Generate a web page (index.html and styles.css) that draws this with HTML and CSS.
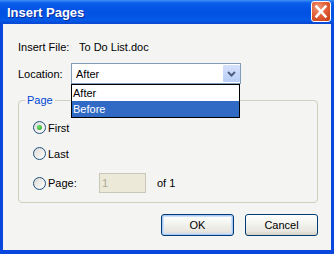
FILE: index.html
```html
<!DOCTYPE html>
<html>
<head>
<meta charset="utf-8">
<link rel="stylesheet" href="styles.css">
</head>
<body>
<div class="window">
  <div class="titlebar">
    <span class="title">Insert Pages</span>
    <span class="close">
      <svg width="20" height="21" viewBox="0 0 20 21"><path d="M5.5 5.5 L14.5 15.5 M14.5 5.5 L5.5 15.5" stroke="#fff" stroke-width="2.6" stroke-linecap="square"/></svg>
    </span>
  </div>
  <div class="client">
    <div class="row row-file"><span class="lbl lbl-file">Insert File:</span><span>To Do List.doc</span></div>
    <div class="row row-loc">
      <span class="lbl lbl-loc">Location:</span>
      <div class="combo">
        <span class="combo-val">After</span>
        <span class="combo-btn"><svg width="9" height="6" viewBox="0 0 9 6"><path d="M1 1 L4.5 4.5 L8 1" fill="none" stroke="#4d6185" stroke-width="2"/></svg></span>
        <ul class="list">
          <li>After</li>
          <li class="sel">Before</li>
        </ul>
      </div>
    </div>
    <div class="group">
      <span class="legend">Page</span>
      <div class="radio-row"><span class="radio checked"></span><span>First</span></div>
      <div class="radio-row"><span class="radio"></span><span>Last</span></div>
      <div class="radio-row row-page"><span class="radio"></span><span class="page-lbl">Page:</span><div class="num"><span>1</span></div><span class="of">of 1</span></div>
    </div>
    <div class="buttons">
      <span class="btn btn-ok">OK</span>
      <span class="btn">Cancel</span>
    </div>
  </div>
</div>
</body>
</html>
```
FILE: styles.css
```css
* { box-sizing: border-box; }
html, body { margin: 0; padding: 0; }
body { width: 334px; height: 254px; overflow: hidden; }
.window {
  width: 334px; height: 254px;
  background: #0a47dc;
  display: flex; flex-direction: column;
  font-family: "Liberation Sans", Arial, sans-serif;
  font-size: 11px; color: #000;
}
.titlebar {
  height: 24px; flex: none;
  display: flex; align-items: center; justify-content: space-between;
  padding: 0 3px 0 7px;
  background: linear-gradient(to bottom, #3d8ef8 0, #0b5ee9 3px, #0455e6 8px, #0152e2 14px, #055ae8 20px, #0846d2 24px);
}
.title {
  color: #fff; font-weight: bold; font-size: 13px;
  text-shadow: 1px 1px 0 #0c2a9a;
}
.close {
  width: 20px; height: 21px; margin-top: -2px;
  border: 1px solid #fff; border-radius: 3px;
  background: radial-gradient(circle at 35% 30%, #f09a78 0, #e2603a 45%, #c23a10 100%);
  display: flex;
}
.close svg { display: block; margin: -1px; }
.client {
  flex: 1;
  margin: 0 3px 4px 3px;
  background: #f4f4f2;
  padding: 0 13px 0 15px;
  display: flex; flex-direction: column;
}
.row { display: flex; align-items: center; }
.row-file { margin-top: 17px; height: 13px; line-height: 13px; }
.lbl-file { width: 61px; }
.row-loc { margin-top: 9px; height: 21px; }
.lbl-loc { width: 53px; }
.combo {
  position: relative;
  width: 170px; height: 21px;
  border: 1px solid #7f9db9; background: #fff;
  display: flex; align-items: center; justify-content: space-between;
  padding-left: 4px;
}
.combo-btn {
  width: 17px; height: 17px;
  background: linear-gradient(to bottom, #d6e2fc, #b9cdf7);
  border-radius: 1px;
  display: flex; align-items: center; justify-content: center;
}
.combo-btn svg { display: block; }
.list {
  position: absolute; left: -1px; top: 20px;
  width: 169px; margin: 0; padding: 0; list-style: none;
  border: 1px solid #000; background: #fff;
  z-index: 2;
}
.list li { height: 16px; line-height: 16px; padding-left: 1px; }
.list li.sel { background: #316ac5; color: #fff; }
.group {
  position: relative;
  margin-top: 16px;
  width: 300px; height: 103px;
  border: 1px solid #d0d0bf; border-radius: 4px;
  padding: 20px 0 0 14px;
}
.legend {
  position: absolute; left: 6px; top: -7px;
  padding: 0 2px; background: #f4f4f2;
  color: #0046d5; line-height: 13px;
}
.radio-row { display: flex; align-items: center; height: 13px; }
.radio-row + .radio-row { margin-top: 13px; }
.row-page { height: 20px; }
.radio {
  width: 13px; height: 13px; border-radius: 50%;
  border: 1px solid #1c5180;
  background: linear-gradient(135deg, #dcdad5, #ffffff);
  margin-right: 2px;
  display: flex; align-items: center; justify-content: center;
}
.radio.checked::after {
  content: ""; width: 5px; height: 5px; border-radius: 50%;
  background: radial-gradient(circle at 40% 35%, #6fe26c, #21a121);
}
.page-lbl { width: 51px; flex: none; }
.num {
  flex: none;
  width: 47px; height: 20px;
  border: 1px solid #c9c7ba; background: #ece9d8;
  color: #aca899; padding-left: 2px;
  display: flex; align-items: center; justify-content: flex-start;
}
.of { margin-left: 11px; }
.buttons {
  margin-top: 11px;
  display: flex; justify-content: flex-end; gap: 11px;
}
.btn {
  width: 73px; height: 22px;
  border: 1px solid #003c74; border-radius: 3px;
  background: linear-gradient(to bottom, #ffffff 0, #f4f4f0 40%, #e8e7e0 80%, #d6d0c5 100%);
  display: flex; align-items: center; justify-content: center;
}
.btn-ok { box-shadow: inset 0 0 0 1px #aac8f6, inset 0 0 0 2px #cee0fb; }
```
